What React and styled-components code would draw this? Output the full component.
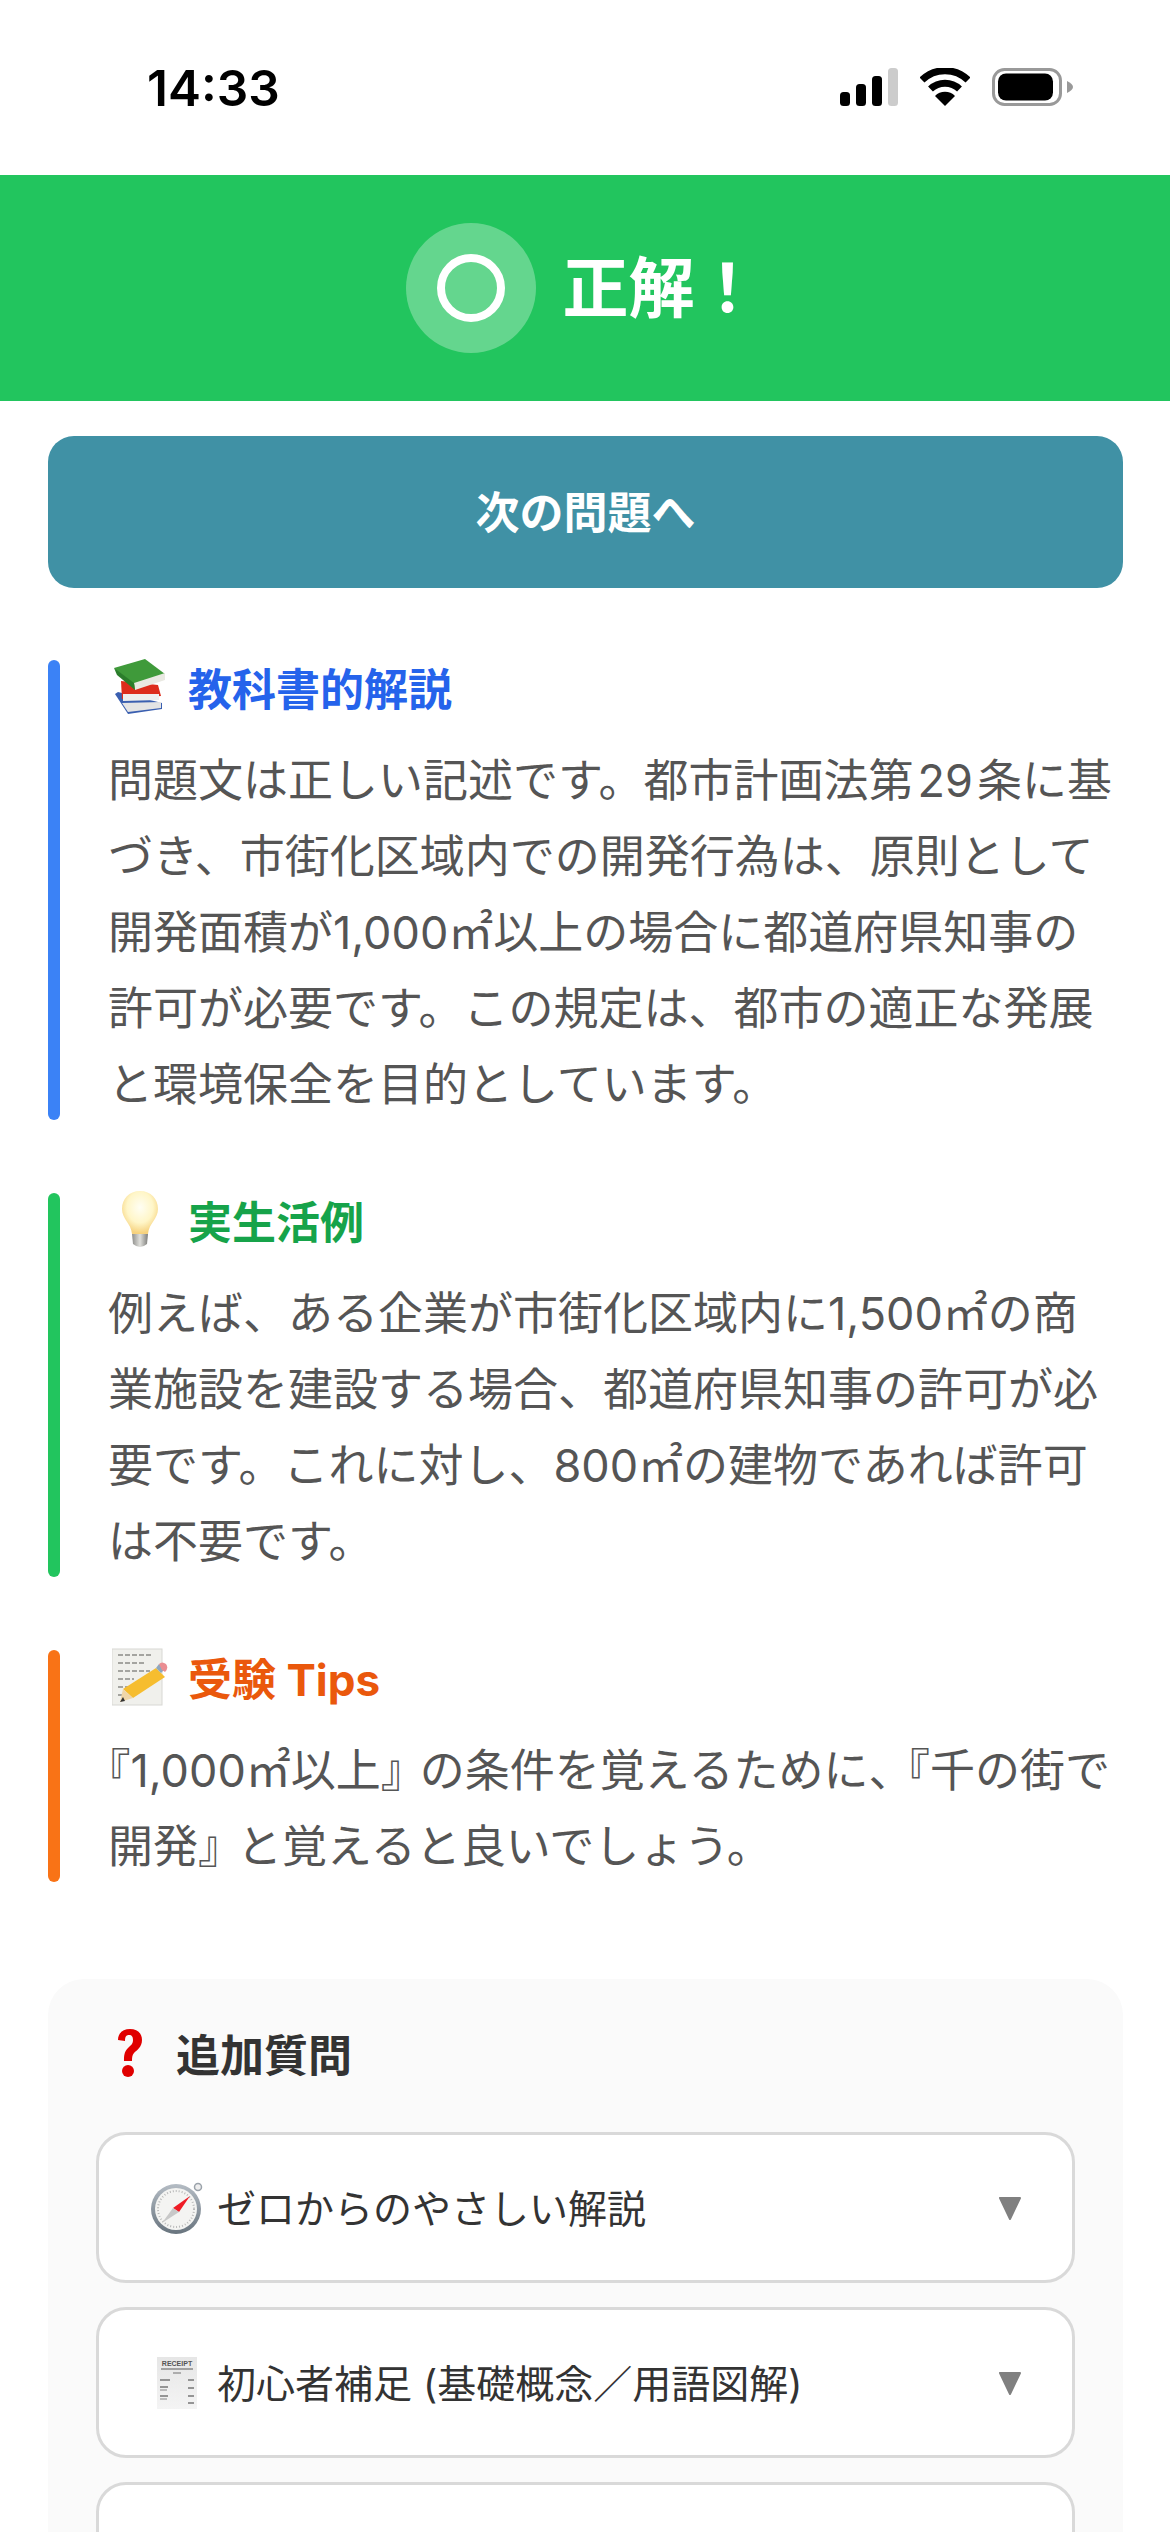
import styled, { createGlobalStyle } from "styled-components"

const GlobalStyle = createGlobalStyle`
  html, body {
    margin: 0;
    padding: 0;
    background: #fff;
  }
  body {
    font-family: Inter, "Noto Sans CJK JP", sans-serif;
  }
`;

const Page = styled.div`
  width: 1170px;
  height: 2532px;
  overflow: hidden;
  background: #fff;
`;

const StatusBar = styled.div`
  height: 175px;
  box-sizing: border-box;
  padding: 60px 96px 0 147px;
  display: flex;
  justify-content: space-between;
  align-items: flex-start;
`;

const Time = styled.div`
  font-size: 49.5px;
  line-height: 54px;
  font-weight: 600;
  color: #000;
  margin-top: 1px;
`;

const StatusIcons = styled.div`
  display: flex;
  align-items: center;
  gap: 22px;
  padding-top: 8px;
`;

const ResultBanner = styled.div`
  height: 226px;
  background: #22c55e;
  display: flex;
  justify-content: center;
  align-items: center;
  gap: 27px;
  padding-right: 4px;
`;

const ResultBadge = styled.div`
  width: 130px;
  height: 130px;
  border-radius: 50%;
  background: rgba(255, 255, 255, 0.3);
  display: flex;
  justify-content: center;
  align-items: center;
`;

const ResultRing = styled.div`
  width: 68px;
  height: 68px;
  box-sizing: border-box;
  border: 8px solid #fff;
  border-radius: 50%;
`;

const ResultText = styled.div`
  font-size: 66px;
  line-height: 80px;
  font-weight: 700;
  color: #fff;
  width: 198px;
`;

const Content = styled.div`
  padding: 35px 47px 0 48px;
`;

const NextButton = styled.button`
  display: block;
  width: 100%;
  height: 152px;
  border: 0;
  border-radius: 26px;
  background: #4091a5;
  color: #fff;
  font-family: inherit;
  font-size: 44px;
  font-weight: 700;
  padding: 0 0 5px;
`;

const Section = styled.section`
  display: flex;
  gap: 48px;
  margin-top: ${(p) => p.$top}px;
`;

const SideBar = styled.div`
  width: 12px;
  flex: none;
  border-radius: 6px;
  background: ${(p) => p.$color};
`;

const SectionBody = styled.div`
  flex: 1;
  min-width: 0;
`;

const SectionHead = styled.div`
  height: 54px;
  display: flex;
  align-items: center;
  gap: 20px;
  padding-left: 4px;
  font-size: 44px;
  font-weight: 700;
  color: ${(p) => p.$color};
`;

const EmojiSlot = styled.span`
  width: 56px;
  height: 60px;
  flex: none;
  display: flex;
  justify-content: center;
  align-items: center;
`;

const Paragraph = styled.div`
  margin-top: 29px;
  margin-bottom: -3px;
  font-size: 45px;
  line-height: 76px;
  color: #555;
  text-spacing-trim: trim-start;
`;

const Line = styled.div`
  white-space: nowrap;
`;

const TightBracket = styled.span`
  letter-spacing: -6px;
`;

const AskCard = styled.div`
  margin-top: 97px;
  border-radius: 36px;
  background: #fafafa;
  padding: 34px 48px 40px;
`;

const AskTitle = styled.div`
  height: 80px;
  display: flex;
  align-items: center;
  gap: 33px;
  padding-left: 19px;
  font-size: 44px;
  font-weight: 600;
  color: #333;
`;

const AskList = styled.div`
  margin-top: 39px;
  display: flex;
  flex-direction: column;
  gap: 24px;
`;

const AskRow = styled.div`
  height: 151px;
  box-sizing: border-box;
  border: 3px solid #d9d9d9;
  border-radius: 30px;
  background: #fff;
  padding: 0 50px 0 50px;
  display: flex;
  align-items: center;
  gap: 12px;
  font-size: 39px;
  font-weight: 400;
  color: #333;
`;

const AskLabel = styled.span`
  flex: 1;
  white-space: nowrap;
  margin-bottom: 3px;
`;

const Caret = styled.svg`
  width: 24px;
  height: 24px;
  flex: none;
`;

const SignalIcon = () => (
  <svg width="58" height="38" viewBox="0 0 58 38">
    <rect x="0" y="24" width="10" height="14" rx="3.5" fill="#000" />
    <rect x="16" y="16" width="10" height="22" rx="3.5" fill="#000" />
    <rect x="32" y="8" width="10" height="30" rx="3.5" fill="#000" />
    <rect x="48" y="0" width="10" height="38" rx="3.5" fill="#ccc" />
  </svg>
)

const WifiIcon = () => (
  <svg width="50" height="38" viewBox="0 0 50 38">
    <path d="M2 12 A33 33 0 0 1 48 12" fill="none" stroke="#000" strokeWidth="7" strokeLinecap="butt" />
    <path d="M10.500 21 A21 21 0 0 1 39.500 21" fill="none" stroke="#000" strokeWidth="7" />
    <path d="M25 38 L15 28 A14 14 0 0 1 35 28 Z" fill="#000" />
  </svg>
)

const BatteryIcon = () => (
  <svg width="82" height="38" viewBox="0 0 82 38">
    <rect x="1.500" y="1.500" width="67" height="35" rx="11" fill="#fff" stroke="#999" strokeWidth="3" />
    <rect x="6" y="5.500" width="55" height="27" rx="8" fill="#000" />
    <path d="M75 13 Q81 16 81 19 Q81 22 75 25 Z" fill="#999" />
  </svg>
)

const BooksEmoji = () => (
  <svg width="56" height="56" viewBox="0 0 56 56">
    <path d="M3 35 L6 33 L50 44 L50 50 L16 55 Z" fill="#3a5fb0" />
    <path d="M10 44 L49 43 L49 49 L16 53 Z" fill="#e4e4e4" />
    <path d="M9 22 L46 26 L49 37 L10 40 Z" fill="#dd2c1c" />
    <path d="M11 35 L47 35 L47 41 L11 42 Z" fill="#eeeeee" />
    <path d="M2 9 L33 0 L53 15 L22 30 Z" fill="#3f9a3a" />
    <path d="M22 24 L53 14 L53 21 L23 31 Z" fill="#e9e9e2" />
    <path d="M2 9 L22 24 L23 31 L5 16 Z" fill="#2b7d2b" />
  </svg>
)

const BulbEmoji = () => (
  <svg width="40" height="60" viewBox="0 0 40 60">
    <defs>
      <radialGradient id="bulbGlow" cx="50%" cy="38%" r="60%">
        <stop offset="0%" stopColor="#fffef4" />
        <stop offset="60%" stopColor="#fff6c8" />
        <stop offset="100%" stopColor="#f6d27e" />
      </radialGradient>
      <linearGradient id="bulbBase" x1="0" x2="1">
        <stop offset="0%" stopColor="#8f8f8c" />
        <stop offset="50%" stopColor="#e0e0dc" />
        <stop offset="100%" stopColor="#7d7d7a" />
      </linearGradient>
    </defs>
    <path d="M20 1 C31 1 38 9 38 19 C38 29 29 33 28 44 L12 44 C11 33 2 29 2 19 C2 9 9 1 20 1 Z" fill="url(#bulbGlow)" />
    <path d="M12 44 L28 44 L27 54 Q20 60 13 54 Z" fill="url(#bulbBase)" />
  </svg>
)

const MemoEmoji = () => (
  <svg width="56" height="58" viewBox="0 0 56 58">
    <rect x="0" y="1" width="50" height="56" fill="#f0f0ec" stroke="#d8d8d4" strokeWidth="1" />
    <path d="M6 7 H40 M6 15 H34 M6 23 H38 M6 31 H22 M6 39 H18 M6 47 H16" stroke="#8a8a86" strokeWidth="1.400" strokeDasharray="5 2" fill="none" />
    <path d="M44 20 L53 29 L21 50 L11 41 Z" fill="#f6bd2f" />
    <path d="M11 41 L21 50 L8 54 Z" fill="#f0d6a8" />
    <path d="M8 54 L11 49 L13 53 Z" fill="#333" />
    <path d="M44 20 L47 16 L53 21 L49 25 Z" fill="#8fa7bd" />
    <path d="M47 16 Q50 13 54 16 Q57 20 53 24 L50 22 Z" fill="#ea8d92" />
  </svg>
)

const QuestionEmoji = () => (
  <svg width="28" height="50" viewBox="0 0 28 50">
    <path d="M3 12 C3 5 8 1 15 1 C22 1 27 5 27 12 C27 19 22 22 19 25 C17 27 17 30 17 33 L9 33 C9 28 9 24 13 20 C16 17 18 16 18 12 C18 9 17 7 14 7 C11 7 10 9 10 13 Z" fill="#e00000" />
    <circle cx="13" cy="43" r="6" fill="#e00000" />
  </svg>
)

const CompassEmoji = () => (
  <svg width="52" height="52" viewBox="0 0 52 52">
    <defs>
      <linearGradient id="compassRim" x1="0" y1="0" x2="0" y2="1">
        <stop offset="0%" stopColor="#b4bcc4" />
        <stop offset="100%" stopColor="#68747e" />
      </linearGradient>
    </defs>
    <circle cx="47" cy="5" r="3.500" fill="#eee" stroke="#9aa2aa" strokeWidth="1.500" />
    <circle cx="25" cy="27" r="25" fill="url(#compassRim)" />
    <circle cx="25" cy="27" r="21" fill="#f4f4f2" />
    <circle cx="25" cy="27" r="18" fill="none" stroke="#b8b8b8" strokeWidth="2" strokeDasharray="1 2" />
    <path d="M39 14 L22 26 L28 30 Z" fill="#ef1c25" />
    <path d="M11 41 L22 26 L28 30 Z" fill="#c8c8c8" />
  </svg>
)

const ReceiptEmoji = () => (
  <svg width="40" height="52" viewBox="0 0 40 52">
    <defs>
      <linearGradient id="receiptPaper" x1="0" y1="0" x2="0" y2="1">
        <stop offset="0%" stopColor="#e6e6e6" />
        <stop offset="100%" stopColor="#f4f4f4" />
      </linearGradient>
    </defs>
    <rect x="0" y="0" width="40" height="52" fill="url(#receiptPaper)" />
    <text x="20" y="9" fontSize="7" fontWeight="700" fontFamily="Liberation Sans, sans-serif" textAnchor="middle" fill="#555">RECEIPT</text>
    <path d="M4 12 H36" stroke="#888" strokeWidth="1.500" />
    <path d="M16 16 H24" stroke="#999" strokeWidth="1.500" />
    <path d="M3 23 H13 M31 23 H37 M3 30 H11 M31 31 H37 M3 39 H11 M31 39 H37 M31 46 H37" stroke="#777" strokeWidth="1.500" />
    <path d="M3 33 H10 M3 42 H10" stroke="#aaa" strokeWidth="1.500" />
  </svg>
)

const sections = [
  {
    top: 72,
    bar: "#3b82f6",
    color: "#2563eb",
    icon: <BooksEmoji />,
    title: "教科書的解説",
    lines: [
      "問題文は正しい記述です。都市計画法第\u200A29\u200A条に基",
      "づき、市街化区域内での開発行為は、原則として",
      "開発面積が1,000㎡以上の場合に都道府県知事の",
      "許可が必要です。この規定は、都市の適正な発展",
      "と環境保全を目的としています。",
    ],
  },
  {
    top: 73,
    bar: "#22c55e",
    color: "#16a34a",
    icon: <BulbEmoji />,
    title: "実生活例",
    lines: [
      "例えば、ある企業が市街化区域内に1,500㎡の商",
      "業施設を建設する場合、都道府県知事の許可が必",
      "要です。これに対し、800㎡の建物であれば許可",
      "は不要です。",
    ],
  },
  {
    top: 73,
    bar: "#f97316",
    color: "#ea580c",
    icon: <MemoEmoji />,
    title: "受験 Tips",
    lines: [
      <>『1,000㎡以上<TightBracket>』</TightBracket>の条件を覚えるために<TightBracket>、</TightBracket>『千の街で</>,
      <>開発<TightBracket>』</TightBracket>と覚えると良いでしょう。</>,
    ],
  },
]

const asks = [
  { icon: <CompassEmoji />, label: "ゼロからのやさしい解説" },
  { icon: <ReceiptEmoji />, label: "初心者補足 (基礎概念／用語図解)" },
  { icon: null, label: "" },
]

const App = () => {
  return (<>
    <GlobalStyle />
    <Page>
      <StatusBar>
        <Time>14:33</Time>
        <StatusIcons>
          <SignalIcon />
          <WifiIcon />
          <BatteryIcon />
        </StatusIcons>
      </StatusBar>

      <ResultBanner>
        <ResultBadge>
          <ResultRing />
        </ResultBadge>
        <ResultText>正解！</ResultText>
      </ResultBanner>

      <Content>
        <NextButton>次の問題へ</NextButton>

        {sections.map((item) => (
          <Section key={item.title} $top={item.top}>
            <SideBar $color={item.bar} />
            <SectionBody>
              <SectionHead $color={item.color}>
                <EmojiSlot>{item.icon}</EmojiSlot>
                {item.title}
              </SectionHead>
              <Paragraph>
                {item.lines.map((line, i) => (
                  <Line key={i}>{line}</Line>
                ))}
              </Paragraph>
            </SectionBody>
          </Section>
        ))}

        <AskCard>
          <AskTitle>
            <QuestionEmoji />
            追加質問
          </AskTitle>
          <AskList>
            {asks.map((item, i) => (
              <AskRow key={i}>
                <EmojiSlot>{item.icon}</EmojiSlot>
                <AskLabel>{item.label}</AskLabel>
                {item.icon && (
                  <Caret viewBox="0 0 24 24">
                    <path d="M2 2 H22 L12 23 Z" fill="#808080" stroke="#808080" strokeWidth="2" strokeLinejoin="round" />
                  </Caret>
                )}
              </AskRow>
            ))}
          </AskList>
        </AskCard>
      </Content>
    </Page>
  </>)
}

export default App
